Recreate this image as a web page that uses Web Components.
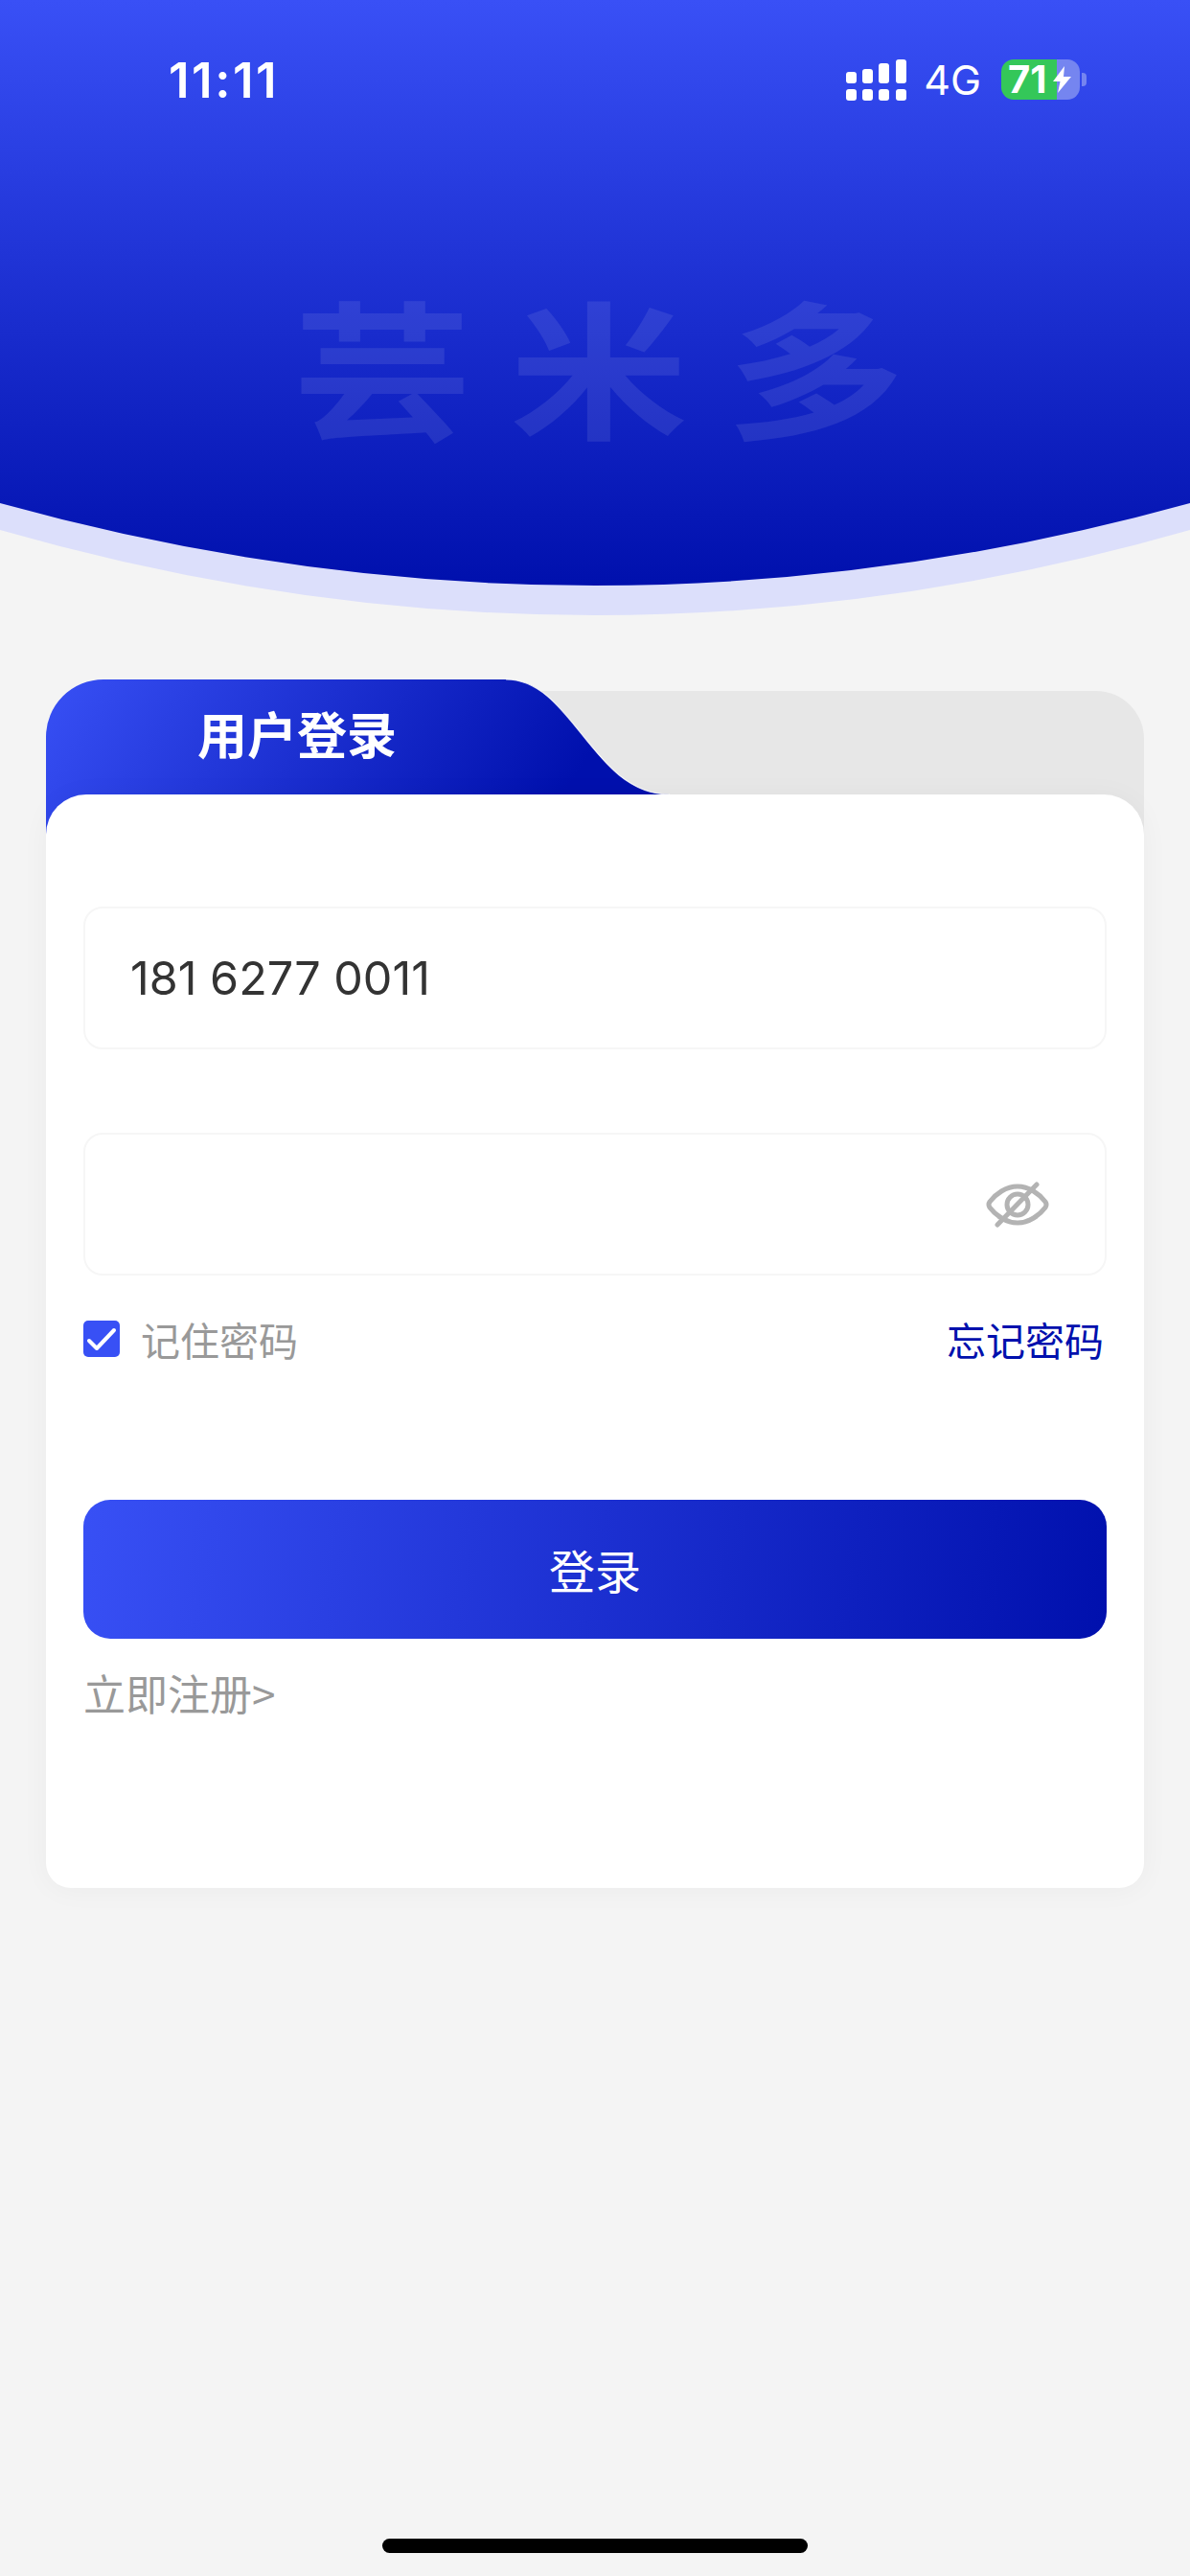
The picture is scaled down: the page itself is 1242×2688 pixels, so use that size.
<!DOCTYPE html>
<html lang="zh">
<head>
<meta charset="utf-8">
<title>用户登录</title>
<style>
  html, body { margin: 0; padding: 0; }
  body {
    width: 1242px; height: 2688px; overflow: hidden;
    background: #f4f4f4;
    font-family: Inter, "Noto Sans CJK SC", sans-serif;
  }
</style>
</head>
<body>
<login-page></login-page>

<script>
// Barra de estado ---------------------------------------------------------------------
class StatusBar extends HTMLElement {
  constructor() { super(); this.attachShadow({mode: 'open'}); }
  connectedCallback() {
    this.shadowRoot.innerHTML = `
      <style>
        :host { display: flex; align-items: flex-start; justify-content: space-between;
                height: 110px; box-sizing: border-box; padding: 62px 108px 0 176px; color: #fff; }
        .time { font: 600 51px/44px Inter, sans-serif; letter-spacing: 2.5px; }
        .right { display: flex; align-items: flex-start; }
        svg { display: block; }
        .net { font: 400 43px/43px Inter, sans-serif; margin: 0 21px 0 18px; }
        .batt { position: relative; width: 82px; height: 42px; border-radius: 13px;
                background: linear-gradient(90deg, #34c759 0 58px, #7585f0 58px);
                font: 700 40px/42px Inter, sans-serif; padding-left: 7px; box-sizing: border-box; }
        .bolt { position: absolute; left: 54px; top: 7px; }
        .nub { width: 5px; height: 14px; margin: 14px 0 0 2px; background: #7585f0; border-radius: 0 4px 4px 0; }
      </style>
      <div class="time">11:11</div>
      <div class="right">
        <svg width="63" height="43" viewBox="0 0 63 43" fill="#fff">
          <rect x="0" y="13" width="11" height="12" rx="3"/><rect x="17" y="10" width="11" height="15" rx="3"/>
          <rect x="34" y="4" width="11" height="21" rx="3"/><rect x="52" y="0" width="11" height="25" rx="3"/>
          <rect x="0" y="31" width="11" height="12" rx="3"/><rect x="17" y="31" width="11" height="12" rx="3"/>
          <rect x="34" y="31" width="11" height="12" rx="3"/><rect x="52" y="31" width="11" height="12" rx="3"/>
        </svg>
        <div class="net">4G</div>
        <div class="batt">71
          <svg class="bolt" width="19" height="28" viewBox="0 0 19 28" fill="#fff"><path d="M12 0 0 16h7.5L5 28 19 11h-8z"/></svg>
        </div>
        <div class="nub"></div>
      </div>`;
  }
}
customElements.define('status-bar', StatusBar);

// Cabecera azul con curva -------------------------------------------------------------
class BrandHeader extends HTMLElement {
  constructor() { super(); this.attachShadow({mode: 'open'}); }
  connectedCallback() {
    this.shadowRoot.innerHTML = `
      <style>
        :host { display: grid; height: 643px; }
        :host > * { grid-area: 1 / 1; }
        svg { display: block; }
        .top { display: flex; flex-direction: column; }
        .mark { margin: 186px 0 0 306px; font: 700 186px/200px "Noto Sans CJK SC", sans-serif;
                letter-spacing: 40px; color: rgba(255,255,255,.09); white-space: nowrap;
                transform: scaleY(.83); transform-origin: 0 0; }
      </style>
      <svg width="1242" height="643" viewBox="0 0 1242 643">
        <defs><linearGradient id="g" x1="0" y1="0" x2="0" y2="1">
          <stop offset="0" stop-color="#3950f6"/><stop offset="1" stop-color="#0010ad"/>
        </linearGradient></defs>
        <path d="M0 553Q621 731 1242 553V480H0z" fill="#dcdffb"/>
        <path d="M0 525Q621 697 1242 525V0H0z" fill="url(#g)"/>
      </svg>
      <div class="top">
        <status-bar></status-bar>
        <div class="mark"><slot></slot></div>
      </div>`;
  }
}
customElements.define('brand-header', BrandHeader);

// Campo de formulario -----------------------------------------------------------------
class TextField extends HTMLElement {
  constructor() { super(); this.attachShadow({mode: 'open'}); }
  connectedCallback() {
    this.shadowRoot.innerHTML = `
      <style>
        :host { display: flex; align-items: center; justify-content: space-between; box-sizing: border-box;
                height: 149px; padding: 0 58px 0 47px; background: #fff;
                border: 2px solid #f6f6f6; border-radius: 20px;
                font: 400 48.5px/60px Inter, sans-serif; color: #333; }
      </style>
      <slot></slot><slot name="end"></slot>`;
  }
}
customElements.define('text-field', TextField);

// Casilla recordar contraseña ---------------------------------------------------------
class RememberRow extends HTMLElement {
  constructor() { super(); this.attachShadow({mode: 'open'}); }
  connectedCallback() {
    this.shadowRoot.innerHTML = `
      <style>
        :host { display: flex; align-items: center; justify-content: space-between; height: 40px; margin-top: 46px;
                padding-right: 3px; font: 400 41px/40px "Noto Sans CJK SC", sans-serif; color: #999; }
        .left { display: flex; align-items: center; gap: 22px; }
        .box { width: 38px; height: 38px; border-radius: 5px; background: #3850f5; display: block; }
        .link { color: #0010ad; }
      </style>
      <div class="left">
        <svg class="box" viewBox="0 0 38 38"><path d="M6 21l8 8L32 10" fill="none" stroke="#fff" stroke-width="4" stroke-linecap="round" stroke-linejoin="round"/></svg>
        <slot></slot>
      </div>
      <div class="link"><slot name="link"></slot></div>`;
  }
}
customElements.define('remember-row', RememberRow);

// Botón degradado ---------------------------------------------------------------------
class GradientButton extends HTMLElement {
  constructor() { super(); this.attachShadow({mode: 'open'}); }
  connectedCallback() {
    this.shadowRoot.innerHTML = `
      <style>
        :host { display: flex; align-items: center; justify-content: center; height: 145px; margin-top: 148px;
                border-radius: 28px; background: linear-gradient(100deg, #3850f5 0%, #0010ad 100%);
                color: #fff; font: 400 48px/60px "Noto Sans CJK SC", sans-serif; padding-bottom: 2px; box-sizing: border-box; }
      </style>
      <slot></slot>`;
  }
}
customElements.define('gradient-button', GradientButton);

// Tarjeta de login --------------------------------------------------------------------
class LoginCard extends HTMLElement {
  constructor() { super(); this.attachShadow({mode: 'open'}); }
  connectedCallback() {
    this.shadowRoot.innerHTML = `
      <style>
        :host { display: block; margin: 66px 48px 0; }
        .tabs { display: grid; height: 120px; }
        .tabs > * { grid-area: 1 / 1; }
        .tabs svg { display: block; overflow: visible; }
        .title { padding: 25px 0 0 158px; color: #fff; font: 700 52px/62px "Noto Sans CJK SC", sans-serif; }
        .panel { position: relative; height: 1141px; box-sizing: border-box; padding: 117px 39px 0; background: #fff;
                 border-radius: 42px 42px 26px 26px; box-shadow: 0 2px 30px rgba(0,0,0,.04); }
      </style>
      <div class="tabs">
        <svg width="1146" height="120" viewBox="0 0 1146 120">
          <defs><linearGradient id="t" x1="0" y1="0" x2="1" y2="0.18">
            <stop offset="0" stop-color="#3850f5"/><stop offset=".92" stop-color="#0010ad"/>
          </linearGradient></defs>
          <path d="M400 12H1096a50 50 0 0 1 50 50V170H400z" fill="#e7e7e7"/>
          <path d="M0 60A60 60 0 0 1 60 0H480C550 0 570 120 651 120H60V180H0z" fill="url(#t)"/>
          <path d="M480 0C550 0 570 120 651 120" fill="none" stroke="#fff" stroke-width="1.2" opacity=".8"/>
        </svg>
        <div class="title"><slot name="title"></slot></div>
      </div>
      <div class="panel"><slot></slot></div>`;
  }
}
customElements.define('login-card', LoginCard);

// Indicador inicio --------------------------------------------------------------------
class HomeIndicator extends HTMLElement {
  constructor() { super(); this.attachShadow({mode: 'open'}); }
  connectedCallback() {
    this.shadowRoot.innerHTML = `
      <style>
        :host { display: block; width: 444px; height: 15px; margin: 679px auto 0; background: #000; border-radius: 8px; }
      </style>`;
  }
}
customElements.define('home-indicator', HomeIndicator);

// Página ------------------------------------------------------------------------------
class LoginPage extends HTMLElement {
  constructor() { super(); this.attachShadow({mode: 'open'}); }
  connectedCallback() {
    this.shadowRoot.innerHTML = `
      <style>
        :host { display: block; }
        .gap { margin-top: 87px; }
        .reg { margin-top: 32px; font: 400 44px/48px "Noto Sans CJK SC", sans-serif; color: #999; }
        .eye { display: block; }
      </style>
      <brand-header>芸米多</brand-header>
      <login-card>
        <span slot="title">用户登录</span>
        <text-field>181 6277 0011</text-field>
        <text-field class="gap">
          <span></span>
          <svg slot="end" class="eye" width="66" height="48" viewBox="0 0 66 48" fill="none" stroke="#b3b3b3" stroke-width="5" stroke-linecap="round" stroke-linejoin="round">
            <path d="M4 21C10 13 21 5 33 5S56 13 62 21Q64 24 62 27C56 35 45 43 33 43S10 35 4 27Q2 24 4 21z"/>
            <circle cx="33" cy="24" r="11"/>
            <path d="M12 45 53 3"/>
          </svg>
        </text-field>
        <remember-row>记住密码<span slot="link">忘记密码</span></remember-row>
        <gradient-button>登录</gradient-button>
        <div class="reg">立即注册&gt;</div>
      </login-card>
      <home-indicator></home-indicator>`;
  }
}
customElements.define('login-page', LoginPage);
</script>
</body>
</html>
